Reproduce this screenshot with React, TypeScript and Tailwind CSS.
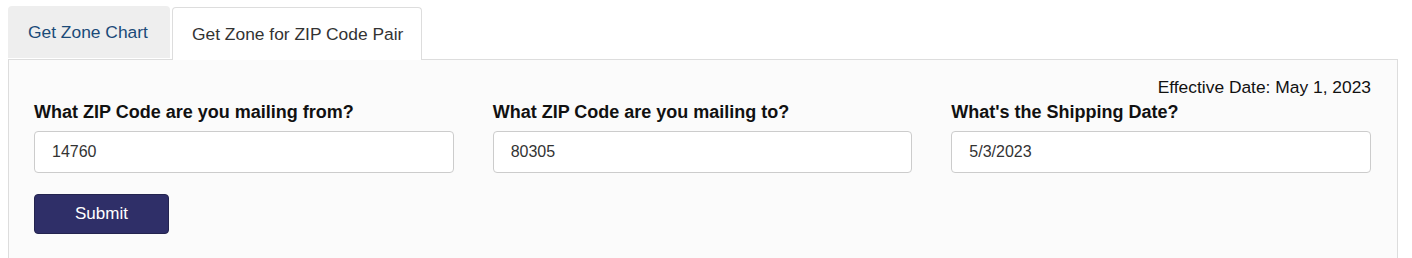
import React from 'react';

const fields = [
  { label: 'What ZIP Code are you mailing from?', value: '14760' },
  { label: 'What ZIP Code are you mailing to?', value: '80305' },
  { label: "What's the Shipping Date?", value: '5/3/2023' },
];

export default function App() {
  return (
    <div className="w-[1412px] h-[258px] bg-white overflow-hidden font-['Liberation_Sans',Arial,sans-serif] text-[#222]">
      <div className="pl-[8px] pr-[14px] pt-[6px]">
        {/* tabs */}
        <div className="flex items-end gap-[2px]">
          <button className="w-[162px] h-[52px] pl-[20px] text-left bg-[#eeeeee] rounded-t-[4px] text-[17.4px] text-[#1b4a78] mb-[1px] pt-[1px]">
            Get Zone Chart
          </button>
          <button className="w-[250px] h-[53px] pl-[19px] text-left bg-white border border-[#dddddd] border-b-0 rounded-t-[4px] text-[17.4px] text-[#333] relative top-[1px] z-10 pt-[1px]">
            Get Zone for ZIP Code Pair
          </button>
        </div>

        {/* panel */}
        <div className="h-[210px] bg-[#fbfbfb] border-t border-l border-r border-[#dddddd] pl-[25px] pr-[26px] pt-[17px]">
          <div className="text-right text-[17.4px] text-[#111] leading-[20px]">Effective Date: May 1, 2023</div>
          <div className="grid grid-cols-3 gap-x-[39px] mt-[4px]">
            {fields.map((f) => (
              <div key={f.label}>
                <label className="block text-[18px] font-bold text-[#111] leading-[22px]">{f.label}</label>
                <input
                  readOnly
                  value={f.value}
                  className="mt-[8px] block w-full h-[42px] bg-white border border-[#cccccc] rounded-[4px] px-[17px] text-[16px] text-[#333] outline-none"
                />
              </div>
            ))}
          </div>
          <button className="mt-[21px] w-[135px] h-[40px] bg-[#2f2f68] border border-[#24244f] rounded-[4px] text-white text-[17px]">
            Submit
          </button>
        </div>
      </div>
    </div>
  );
}
